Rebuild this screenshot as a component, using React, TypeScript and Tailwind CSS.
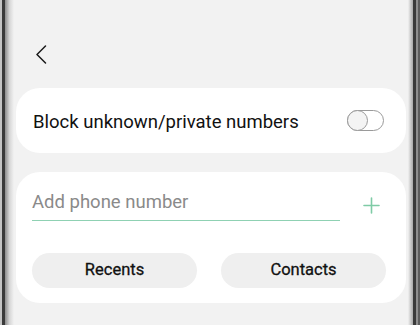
import React from "react";

export default function App() {
  return (
    <div
      className="flex w-[420px] h-[325px] bg-[#f2f2f2] overflow-hidden"
      style={{ fontFamily: "Roboto, 'Noto Sans', sans-serif" }}
    >
      {/* left bezel */}
      <div className="w-[2px] bg-[#c4c4c4]" />
      <div className="w-[3px] bg-[#3a3a3a]" />
      <div className="w-[9px] bg-gradient-to-r from-[#8c8c8c] via-[#d6d6d6] to-[#f2f2f2]" />

      {/* screen */}
      <div className="flex-1 flex flex-col px-[2px]">
        <div className="h-[88px] flex items-start pl-[19px] pt-[45px]">
          <svg width="12" height="19" viewBox="0 0 12 19" fill="none">
            <path d="M10.5 1 L2 9.5 L10.5 18" stroke="#1a1a1a" strokeWidth="1.5" strokeLinecap="round" strokeLinejoin="round" />
          </svg>
        </div>

        <div className="h-[65px] bg-white rounded-[24px] flex items-center justify-between pl-[17px] pr-[22px]">
          <span className="text-[18.5px] text-[#111] pt-[5px]">Block unknown/private numbers</span>
          <div className="relative w-[37px] h-[21px] rounded-full border-[1.5px] border-[#9a9a9a] bg-white">
            <div className="absolute left-[-1.5px] top-[-1.5px] w-[21px] h-[21px] rounded-full border-[1.5px] border-[#9a9a9a] bg-[#f4f4f4]" />
          </div>
        </div>

        <div className="mt-[19px] h-[131px] bg-white rounded-[24px] flex flex-col pl-[16px] pr-[20px] pt-[17px]">
          <div className="flex items-center">
            <div className="w-[308px] h-[32px] border-b-[1.5px] border-[#8fd1b3] flex items-center pb-[4px]">
              <span className="text-[18.5px] text-[#8a8a8a] leading-none">Add phone number</span>
            </div>
            <div className="flex-1 flex justify-end pr-[6px]">
              <svg width="17" height="17" viewBox="0 0 17 17" fill="none">
                <path d="M8.5 1 V16 M1 8.5 H16" stroke="#7fcba6" strokeWidth="1.6" strokeLinecap="round" />
              </svg>
            </div>
          </div>
          <div className="flex gap-[24px] mt-[32px]">
            <button className="w-[165px] h-[35px] rounded-full bg-[#efefef] text-[16.5px] font-normal text-[#111] [-webkit-text-stroke:0.3px_#111]">
              Recents
            </button>
            <button className="w-[165px] h-[35px] rounded-full bg-[#efefef] text-[16.5px] font-normal text-[#111] [-webkit-text-stroke:0.3px_#111]">
              Contacts
            </button>
          </div>
        </div>
      </div>

      {/* right bezel */}
      <div className="w-[5px] bg-gradient-to-r from-[#f2f2f2] to-[#a8a8a8]" />
      <div className="w-[3px] bg-[#3a3a3a]" />
      <div className="w-[2px] bg-[#8e8e8e]" />
      <div className="w-[2px] bg-[#5c5c5c]" />
    </div>
  );
}
